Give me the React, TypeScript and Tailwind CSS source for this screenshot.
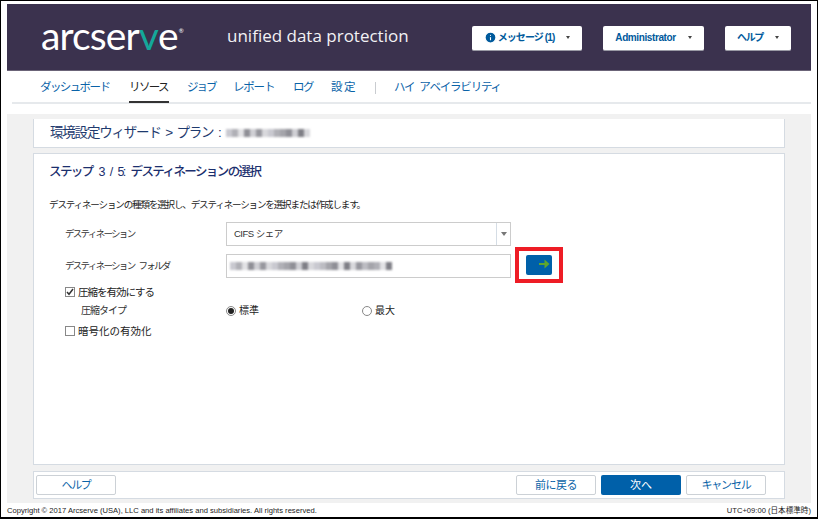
import { Info } from "lucide-react";
import React from "react";

const jp = "font-['Liberation_Sans','Noto_Sans_CJK_JP',sans-serif]";

const navItems = [
  { label: "ダッシュボード", cls: "w-[71px] tracking-[-1.6px]" },
  { label: "リソース", cls: "w-[40px] tracking-[-1.6px]" },
  { label: "ジョブ", cls: "w-[28px] tracking-[-2px]" },
  { label: "レポート", cls: "w-[42px] tracking-[-1.2px]" },
  { label: "ログ", cls: "w-[20px] tracking-[-1.6px]" },
  { label: "設定", cls: "w-[27px] tracking-[1.5px]" },
];

// blurred-out server names in the screenshot
const blurCells = [
  "bg-[#c9c9d0]", "bg-[#8f8f96]", "bg-[#d8d8dc]", "bg-[#a4a4aa]", "bg-[#7f7f86]",
  "bg-[#bcbcc2]", "bg-[#e2e2e5]", "bg-[#97979e]", "bg-[#b0b0b6]", "bg-[#cfcfd4]",
];

const Mosaic = ({ cells }: { cells: number }) => (
  <span className="flex h-[8px] blur-[1.2px]">
    {Array.from({ length: cells }, (_, i) => (
      <span key={i} className={`w-[6px] h-full ${blurCells[(i * 7 + (i % 3)) % blurCells.length]}`} />
    ))}
  </span>
);

const HeaderButton = ({ width, children }: { width: string; children: React.ReactNode }) => (
  <button className={`${width} h-[25px] flex items-center justify-center bg-white rounded-[2px] border-b border-[#9a9aa5] text-[10px] font-bold text-[#005a9c]`}>
    {children}
    <span className="ml-[12px] w-0 h-0 border-x-[2.5px] border-x-transparent border-t-[3px] border-t-[#444]" />
  </button>
);

const FooterButton = ({ children, primary, cls }: { children: React.ReactNode; primary?: boolean; cls?: string }) => (
  <button
    className={`w-[80px] h-[20px] flex items-center justify-center rounded-[2px] text-[11px] ${cls ?? ""} ${
      primary ? "bg-[#0060a9] text-white" : "bg-white border border-[#ccd1d6] text-[#0a63a8]"
    }`}
  >
    {children}
  </button>
);

const FormRow = ({ label, children }: { label: string; children: React.ReactNode }) => (
  <div className="flex items-center h-[24px]">
    <span className="w-[177px] pl-[16px] text-[9.5px] tracking-[-1.7px] [word-spacing:3px] text-[#333]">{label}</span>
    {children}
  </div>
);

export default function App() {
  return (
    <div className={`${jp} w-[818px] h-[519px] bg-white border-t-[1px] border-x-[1px] border-b-[2px] border-black overflow-hidden flex flex-col pt-[3px] px-[6px]`}>
      <header className="h-[67px] shrink-0 bg-[#3b324e] flex items-center border-b border-[#6b6478]">
        <div className="ml-[34px] w-[151px] flex items-start text-white font-['Lato',sans-serif] text-[39px] leading-[46px] tracking-[-0.9px] -mt-[4px]">
          <span>arcser</span>
          <span className="text-[#14a89a]">v</span>
          <span>e</span>
          <span className="text-[6px] leading-[6px] mt-[16px] ml-[1px]">®</span>
        </div>
        <div className="ml-[35px] text-[17px] font-['Open_Sans',sans-serif] text-[#f2f1f4] -mt-[3px]">unified data protection</div>
        <div className="ml-auto mr-[20px] flex gap-[21px] mt-[2px]">
          <HeaderButton width="w-[110px]">
            <Info className="w-[13px] h-[13px] mr-[1px] fill-[#005a9c] text-white" />
            <span className="tracking-[-0.9px]">メッセージ (1)</span>
          </HeaderButton>
          <HeaderButton width="w-[101px]">
            <span className="tracking-[-0.4px]">Administrator</span>
          </HeaderButton>
          <HeaderButton width="w-[66px]">
            <span className="tracking-[-1.4px]">ヘルプ</span>
          </HeaderButton>
        </div>
      </header>

      <nav className="h-[32px] shrink-0 mt-[1px] ml-[5px] flex items-start border-b-2 border-[#e6e9ec] text-[11.5px] text-[#0a63a8]">
        <div className="flex gap-[18px] pl-[28px] h-[31px]">
          {navItems.map((item) => (
            <a
              key={item.label}
              className={`h-[31px] leading-[30px] whitespace-nowrap ${item.cls} ${
                item.label === "リソース" ? "text-[#222] border-b-2 border-[#333]" : ""
              }`}
            >
              {item.label}
            </a>
          ))}
        </div>
        <span className="ml-[17px] mt-[10px] w-px h-[12px] bg-[#c9ccd0]" />
        <a className="ml-[18px] leading-[30px] tracking-[-1.2px] [word-spacing:3px] whitespace-nowrap">ハイ アベイラビリティ</a>
      </nav>

      <main className="mt-[10px] h-[389px] shrink-0 bg-[#f1f1f1] flex flex-col px-[26px] pt-[5px] gap-[5px]">
        <div className="h-[29px] shrink-0 bg-white border border-[#d5dbe2] border-t-0 flex items-center pl-[16px] text-[13.5px] tracking-[-1.2px] [word-spacing:2px] text-[#1e3a6e]">
          環境設定ウィザード &gt; プラン :
          <span className="ml-[5px]">
            <Mosaic cells={14} />
          </span>
        </div>

        <section className="h-[312px] shrink-0 bg-white border border-[#d5dbe2] pl-[15px] pt-[10px] flex flex-col">
          <h2 className="text-[12.5px] leading-[16px] font-medium tracking-[-1.6px] [word-spacing:4px] text-[#1b2f6e]">ステップ 3 / 5: デスティネーションの選択</h2>
          <p className="mt-[18px] text-[9.5px] leading-[14px] tracking-[-1.12px] text-[#222]">デスティネーションの種類を選択し、デスティネーションを選択または作成します。</p>

          <div className="mt-[10px] flex flex-col gap-[8px]">
            <FormRow label="デスティネーション">
              <div className="w-[285px] h-[24px] border border-[#ccc] flex items-center">
                <span className="flex-1 pl-[7px] text-[9.5px] tracking-[-0.5px] text-[#333]">CIFS シェア</span>
                <span className="w-[14px] h-full border-l border-[#d5dde5] flex items-center justify-center">
                  <span className="w-0 h-0 border-x-[3px] border-x-transparent border-t-[4px] border-t-[#777]" />
                </span>
              </div>
            </FormRow>
            <FormRow label="デスティネーション フォルダ">
              <div className="w-[285px] h-[24px] border border-[#ccc] flex items-center pl-[3px]">
                <Mosaic cells={27} />
              </div>
              <span className="relative ml-[15px] mb-[2px] w-[26px] h-[20px] rounded-[2px] bg-[#0060a9] flex items-center justify-center">
                <svg width="11" height="10" viewBox="0 0 11 10" className="ml-[10px] -mt-[3px]">
                  <path d="M0 4h5.500V.5L10.500 5l-5 4.500V6H0z" fill="#5fa62e" />
                </svg>
                <span className="absolute -left-[11px] -top-[8px] w-[48px] h-[36px] border-[4px] border-[#ee1c25]" />
              </span>
            </FormRow>
          </div>

          <label className="mt-[7px] ml-[16px] flex items-center gap-[3px] text-[10.5px] leading-[14px] tracking-[-1px] text-[#222]">
            <span className="w-[10px] h-[10px] border border-[#888] flex items-center justify-center">
              <svg width="8" height="8" viewBox="0 0 8 8">
                <path d="M1 4l2 2.300L7 1" fill="none" stroke="#333" strokeWidth="1.500" />
              </svg>
            </span>
            圧縮を有効にする
          </label>
          <div className="mt-[5px] flex items-center text-[10px] leading-[14px]">
            <span className="w-[177px] pl-[32px] tracking-[-1px] text-[#333]">圧縮タイプ</span>
            <span className="w-[136px] flex items-center gap-[3px] text-[#222]">
              <span className="w-[10px] h-[10px] rounded-full border border-[#888] flex items-center justify-center">
                <span className="w-[6px] h-[6px] rounded-full bg-[#222]" />
              </span>
              標準
            </span>
            <span className="flex items-center gap-[3px] text-[#222]">
              <span className="w-[10px] h-[10px] rounded-full border border-[#888]" />
              最大
            </span>
          </div>
          <label className="mt-[6px] ml-[16px] flex items-center gap-[3px] text-[10.5px] leading-[14px] text-[#222]">
            <span className="w-[10px] h-[10px] border border-[#888]" />
            暗号化の有効化
          </label>
        </section>

        <div className="mt-[1px] h-[28px] shrink-0 bg-white border border-[#d5dbe2] flex items-center justify-between px-[2px] pr-[18px]">
          <FooterButton cls="tracking-[-1.4px]">ヘルプ</FooterButton>
          <div className="flex gap-[5px]">
            <FooterButton cls="tracking-[-0.5px]">前に戻る</FooterButton>
            <FooterButton primary>次へ</FooterButton>
            <FooterButton cls="tracking-[-1.2px]">キャンセル</FooterButton>
          </div>
        </div>
      </main>

      <footer className="flex-1 flex items-center justify-between text-[7.6px] text-[#222] pt-[1px]">
        <span>Copyright © 2017 Arcserve (USA), LLC and its affiliates and subsidiaries. All rights reserved.</span>
        <span>UTC+09:00 (日本標準時)</span>
      </footer>
    </div>
  );
}
